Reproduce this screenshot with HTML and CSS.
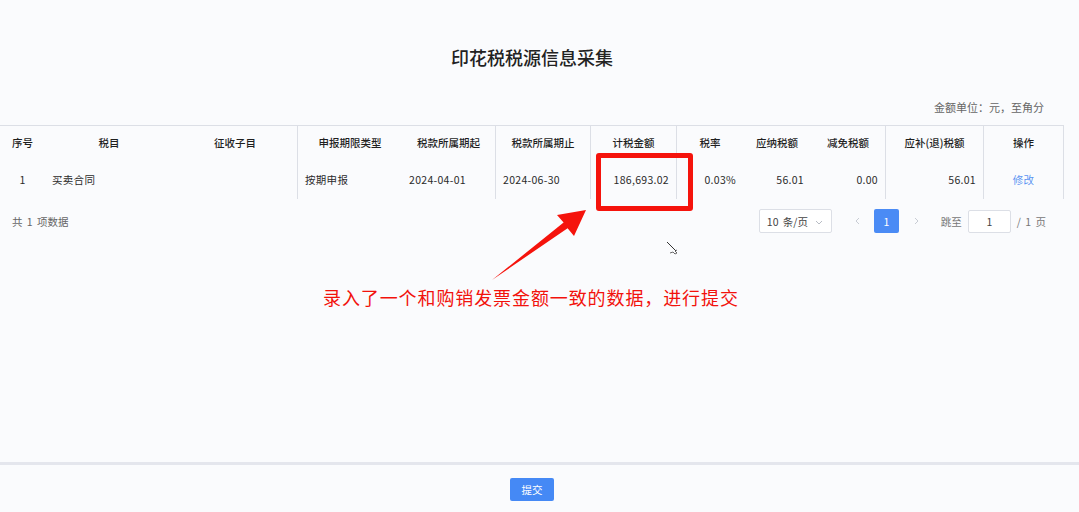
FILE: index.html
```html
<!DOCTYPE html>
<html lang="zh-CN">
<head>
<meta charset="utf-8">
<title>印花税税源信息采集</title>
<link rel="stylesheet" href="styles.css">
</head>
<body>
<div class="page">
  <main class="main">
    <h1 class="title">印花税税源信息采集</h1>
    <div class="unit">金额单位：元，至角分</div>
    <div class="grid">
      <div class="th">序号</div>
      <div class="th">税目</div>
      <div class="th br">征收子目</div>
      <div class="th">申报期限类型</div>
      <div class="th br">税款所属期起</div>
      <div class="th br">税款所属期止</div>
      <div class="th br">计税金额</div>
      <div class="th">税率</div>
      <div class="th">应纳税额</div>
      <div class="th br">减免税额</div>
      <div class="th br">应补(退)税额</div>
      <div class="th br">操作</div>

      <div class="td c">1</div>
      <div class="td l">买卖合同</div>
      <div class="td br"></div>
      <div class="td l">按期申报</div>
      <div class="td l br">2024-04-01</div>
      <div class="td l br">2024-06-30</div>
      <div class="td r br">186,693.02</div>
      <div class="td r">0.03%</div>
      <div class="td r">56.01</div>
      <div class="td r br">0.00</div>
      <div class="td r br">56.01</div>
      <div class="td c br"><span class="link">修改</span></div>
    </div>
    <div class="pager">
      <div class="total">共 1 项数据</div>
      <div class="pg">
        <div class="select">10 条/页
          <svg class="chev" width="8" height="5" viewBox="0 0 8 5"><path d="M1 1l3 3 3-3" fill="none" stroke="#b8bcc4" stroke-width="1"/></svg>
        </div>
        <div class="nav prev"><svg width="5" height="8" viewBox="0 0 5 8"><path d="M4 1L1 4l3 3" fill="none" stroke="#c8ccd4" stroke-width="1"/></svg></div>
        <div class="cur">1</div>
        <div class="nav next"><svg width="5" height="8" viewBox="0 0 5 8"><path d="M1 1l3 3-3 3" fill="none" stroke="#c8ccd4" stroke-width="1"/></svg></div>
        <div class="jump">跳至</div>
        <div class="input">1</div>
        <div class="of">/ 1 页</div>
      </div>
    </div>
  </main>
  <footer class="footer">
    <button class="submit">提交</button>
  </footer>

  <div class="redbox"></div>
  <svg class="arrow" width="1079" height="512" viewBox="0 0 1079 512">
    <polygon points="492,280 563.6,222.6 557,215 586,210 574,236 567.6,228.2" fill="#f5130c"/>
  </svg>
  <svg class="cursor" width="14" height="16" viewBox="0 0 14 16">
    <path d="M1 1L10 10" stroke="#333" stroke-width="1" fill="none"/>
    <path d="M4 12l3-1 2 2 2-1-2-2 2-1" stroke="#444" stroke-width="0.8" fill="none"/>
  </svg>
  <div class="note">录入了一个和购销发票金额一致的数据，进行提交</div>
</div>
</body>
</html>
```
FILE: styles.css
```css
* { box-sizing: border-box; }
html, body { margin: 0; padding: 0; }
body {
  font-family: "Noto Sans CJK SC", "Noto Sans", "Liberation Sans", sans-serif;
  background: #fafbfd;
  color: #333;
}
.page {
  position: relative;
  width: 1079px;
  height: 512px;
  display: flex;
  flex-direction: column;
  overflow: hidden;
}
.main { flex: 1; }
.title {
  margin: 45px 0 0;
  padding-right: 15px;
  font-size: 18px;
  line-height: 24px;
  font-weight: 500;
  text-align: center;
  color: #222;
}
.unit {
  margin-top: 31px;
  padding-right: 35px;
  text-align: right;
  font-size: 11px;
  line-height: 14px;
  color: #666;
}
.grid {
  margin-top: 11px;
  width: 1064px;
  display: grid;
  grid-template-columns: 45px 128px 125px 104px 94px 95px 86px 66px 68px 75px 98px 80px;
  grid-template-rows: 37px 36px;
  border-top: 1px solid #dcdfe6;
  font-size: 10.5px;
}
.th, .td {
  display: flex;
  align-items: center;
  padding: 0 7px 4px;
  white-space: nowrap;
}
.th {
  justify-content: center;
  color: #1f1f1f;
  font-weight: 500;
}
.td { color: #2a2a2a; letter-spacing: 0.3px; }
.td.l { justify-content: flex-start; }
.td.r { justify-content: flex-end; }
.td.c { justify-content: center; }
.br { border-right: 1px solid #dcdfe6; }
.link { color: #5b94f2; }

.pager {
  margin-top: 10px;
  height: 24px;
  display: flex;
  align-items: center;
  justify-content: space-between;
  padding: 0 33px 0 12px;
  font-size: 10.5px;
}
.total { color: #666; word-spacing: 2px; }
.pg { display: flex; align-items: center; color: #666; }
.select {
  width: 73px;
  height: 24px;
  border: 1px solid #dcdfe6;
  border-radius: 2px;
  background: #fff;
  display: flex;
  align-items: center;
  padding-left: 7px;
  color: #444;
  word-spacing: 2px;
  position: relative;
}
.chev { position: absolute; right: 8px; top: 10px; }
.nav {
  width: 24px;
  height: 24px;
  display: flex;
  align-items: center;
  justify-content: center;
}
.prev { margin-left: 14px; }
.cur {
  margin-left: 4px;
  width: 25px;
  height: 24px;
  border-radius: 2px;
  background: #4a8bf5;
  color: #fff;
  display: flex;
  align-items: center;
  justify-content: center;
}
.next { margin-left: 6px; }
.jump { margin-left: 12px; color: #777; }
.input {
  margin-left: 6px;
  width: 43px;
  height: 23px;
  border: 1px solid #dcdfe6;
  border-radius: 2px;
  background: #fff;
  display: flex;
  align-items: center;
  justify-content: center;
  color: #444;
}
.of { margin-left: 6px; color: #777; word-spacing: 2px; }

.footer {
  height: 50px;
  border-top: 3px solid #e4e6ed;
  padding: 13px 15px 0 0;
  display: flex;
  justify-content: center;
}
.submit {
  width: 44px;
  height: 23px;
  border: 0;
  border-radius: 2px;
  background: #4589f5;
  color: #fff;
  font-family: inherit;
  font-size: 10.5px;
  padding: 0;
}

.redbox {
  position: absolute;
  left: 596px;
  top: 153px;
  width: 97px;
  height: 58px;
  border: 5px solid #f5130c;
  border-radius: 3px;
}
.arrow { position: absolute; left: 0; top: 0; pointer-events: none; }
.cursor { position: absolute; left: 666px; top: 241px; }
.note {
  position: absolute;
  left: 323px;
  top: 285px;
  font-size: 18px;
  line-height: 24px;
  letter-spacing: 0.9px;
  color: #f2120c;
  white-space: nowrap;
}
```
